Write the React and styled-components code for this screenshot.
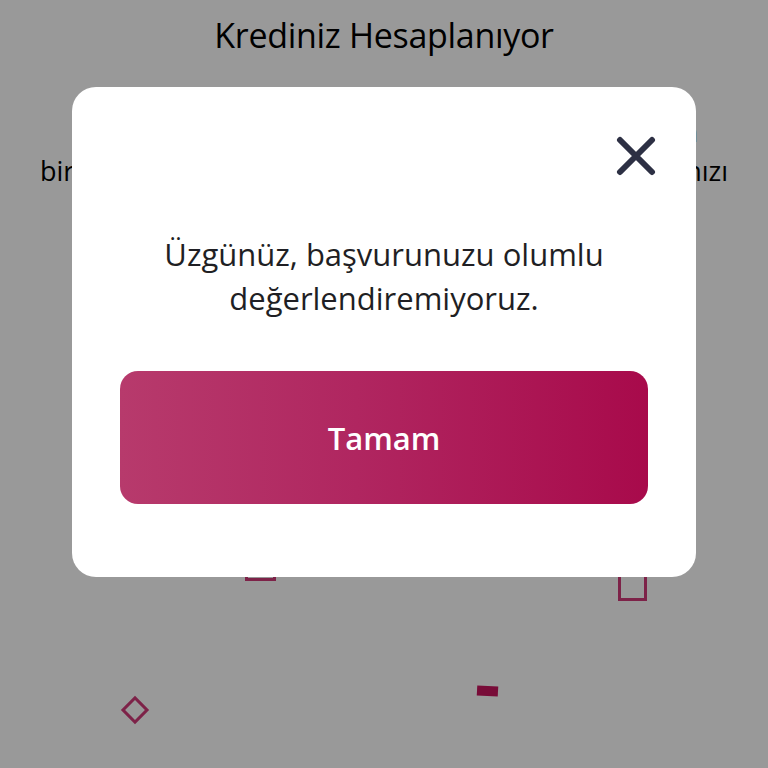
import React from "react";
import styled, { createGlobalStyle } from "styled-components";

const Global = createGlobalStyle`
  html, body { margin: 0; padding: 0; background: #ffffff; }
  body { font-family: "Open Sans", "Noto Sans", sans-serif; }
  * { box-sizing: border-box; }
`;

const Page = styled.div`
  position: relative;
  width: 768px;
  height: 768px;
  overflow: hidden;
  background: #ffffff;
  display: flex;
  flex-direction: column;
  align-items: center;
`;

const Title = styled.h1`
  margin: 14px 0 0;
  font-size: 34px;
  font-weight: 500;
  color: #000;
  line-height: 42px;
  letter-spacing: -0.3px;
`;

const Paragraph = styled.div`
  margin-top: 56px;
  width: 100%;
  display: flex;
  flex-direction: column;
`;

const ParaLine = styled.div`
  padding: 0 ${(p) => p.$right}px 0 ${(p) => p.$left}px;
  font-size: 27px;
  line-height: 39px;
  color: #000;
  text-align: justify;
  text-align-last: justify;
`;

const Shape = styled.div`
  position: absolute;
  left: ${(p) => p.$x}px;
  top: ${(p) => p.$y}px;
  width: ${(p) => p.$w}px;
  height: ${(p) => p.$h}px;
  border: ${(p) => (p.$filled ? "none" : "3px solid #d03a78")};
  background: ${(p) => (p.$filled ? "#c8155e" : "transparent")};
  transform: rotate(${(p) => p.$rot || 0}deg);
`;

const Overlay = styled.div`
  position: fixed;
  inset: 0;
  background: rgba(0, 0, 0, 0.4);
  display: flex;
  justify-content: center;
  align-items: flex-start;
  padding-top: 87px;
`;

const Modal = styled.div`
  width: 624px;
  height: 490px;
  background: #ffffff;
  border-radius: 24px;
  padding: 45px 48px 73px;
  display: flex;
  flex-direction: column;
`;

const CloseRow = styled.div`
  display: flex;
  justify-content: flex-end;
  margin-right: -12px;
`;

const CloseButton = styled.button`
  width: 48px;
  height: 48px;
  padding: 0;
  border: none;
  background: transparent;
  display: flex;
  align-items: center;
  justify-content: center;
  cursor: pointer;
`;

const Message = styled.p`
  margin: 52px 0 0;
  text-align: center;
  font-size: 31px;
  line-height: 44px;
  color: #1f1f24;
`;

const PrimaryButton = styled.button`
  margin-top: 51px;
  height: 133px;
  width: 100%;
  border: none;
  border-radius: 18px;
  background: linear-gradient(90deg, #b73a6c 0%, #b02660 45%, #a80a4b 100%);
  color: #ffffff;
  font-family: "Open Sans", "Noto Sans", sans-serif;
  font-size: 31px;
  font-weight: 600;
  cursor: pointer;
`;

export default function App() {
  return (
    <>
      <Global />
      <Page>
        <Title>Krediniz Hesaplanıyor</Title>
        <Paragraph>
          <ParaLine $left={71} $right={70}>
            Başvurunuz değerlendiriliyor, lütfen
          </ParaLine>
          <ParaLine $left={40} $right={40}>
            birkaç saniye içinde kredi oranınızı
          </ParaLine>
        </Paragraph>
        <Shape $x={245} $y={555} $w={31} $h={26} />
        <Shape $x={618} $y={560} $w={29} $h={41} />
        <Shape $x={125} $y={700} $w={20} $h={20} $rot={45} />
        <Shape $x={477} $y={686} $w={21} $h={10} $filled $rot={3} />
      </Page>
      <Overlay>
        <Modal>
          <CloseRow>
            <CloseButton aria-label="Kapat">
              <svg width="40" height="40" viewBox="0 0 40 40">
                <path
                  d="M4 4 L36 36 M36 4 L4 36"
                  stroke="#2d3044"
                  strokeWidth="6"
                  strokeLinecap="round"
                  fill="none"
                />
              </svg>
            </CloseButton>
          </CloseRow>
          <Message>
            Üzgünüz, başvurunuzu olumlu
            <br />
            değerlendiremiyoruz.
          </Message>
          <PrimaryButton>Tamam</PrimaryButton>
        </Modal>
      </Overlay>
    </>
  );
}
